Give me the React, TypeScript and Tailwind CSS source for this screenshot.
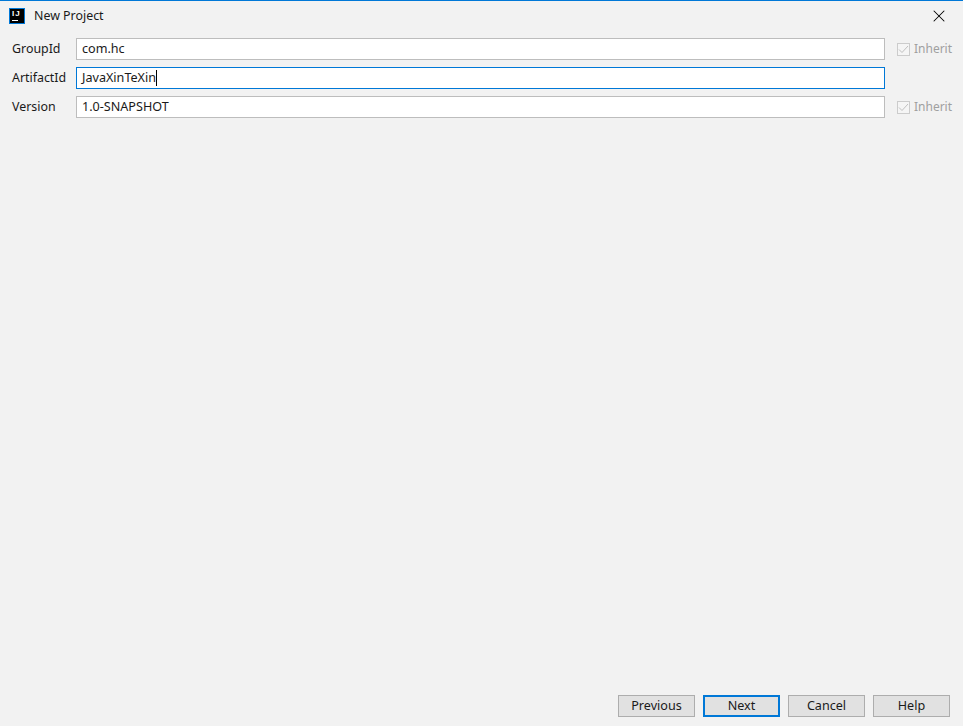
import React from 'react';
import { X } from 'lucide-react';

const font = { fontFamily: '"Noto Sans", sans-serif' };

function InheritBox() {
  return (
    <label className="flex items-center ml-3 w-[54px] text-[12px] text-[#a0a0a0]">
      <span className="w-[13px] h-[13px] border border-[#cccccc] bg-[#f5f5f5] flex items-center justify-center shrink-0">
        <svg width="11" height="11" viewBox="0 0 11 11" fill="none">
          <path d="M1 5.5 L4 8.5 L10 2" stroke="#c0c0c0" strokeWidth="1" />
        </svg>
      </span>
      <span className="ml-1">Inherit</span>
    </label>
  );
}

function Field({ label, value, focused, inherit }: { label: string; value: string; focused?: boolean; inherit?: boolean }) {
  return (
    <div className="flex items-center h-[22px]">
      <div className="w-[76px] shrink-0 text-[12.4px] text-[#1a1a1a] pl-3 whitespace-nowrap">{label}</div>
      <div
        className={`w-[809px] h-[22px] bg-white border flex items-center pl-[5px] text-[12.6px] text-[#1a1a1a] ${
          focused ? 'border-[#0078d7]' : 'border-[#bdbdbd]'
        }`}
      >
        <span>{value}</span>
        {focused && <span className="w-px h-[16px] bg-black" />}
      </div>
      {inherit && <InheritBox />}
    </div>
  );
}

function Btn({ label, primary }: { label: string; primary?: boolean }) {
  return (
    <button
      className={`w-[77px] h-[22px] bg-[#e1e1e1] text-[12.6px] text-[#1a1a1a] flex items-center justify-center ${
        primary ? 'border-2 border-[#0078d7]' : 'border border-[#adadad]'
      }`}
    >
      {label}
    </button>
  );
}

export default function App() {
  return (
    <div className="w-[963px] h-[726px] bg-[#f2f2f2] border-t border-[#0078d7] flex flex-col overflow-hidden" style={font}>
      <div className="h-[29px] flex items-center pl-[9px] pr-[14px] shrink-0">
        <div className="w-[16px] h-[16px] bg-black border border-[#0078d7] text-white shrink-0 flex flex-col pl-[2px] pt-px">
          <span className="text-[8px] font-bold leading-[8px] tracking-[1px] font-['Liberation_Sans',sans-serif]">IJ</span>
          <span className="w-[6px] h-px bg-white mt-[2px]" />
        </div>
        <span className="ml-[9px] mt-px text-[12.4px] text-[#1a1a1a]">New Project</span>
        <X className="ml-auto text-black" size={20} strokeWidth={1.25} />
      </div>
      <div className="flex flex-col gap-[7px] mt-2 flex-1">
        <Field label="GroupId" value="com.hc" inherit />
        <Field label="ArtifactId" value="JavaXinTeXin" focused />
        <Field label="Version" value="1.0-SNAPSHOT" inherit />
      </div>
      <div className="flex justify-end gap-2 pr-[13px] pb-[9px]">
        <Btn label="Previous" />
        <Btn label="Next" primary />
        <Btn label="Cancel" />
        <Btn label="Help" />
      </div>
    </div>
  );
}
